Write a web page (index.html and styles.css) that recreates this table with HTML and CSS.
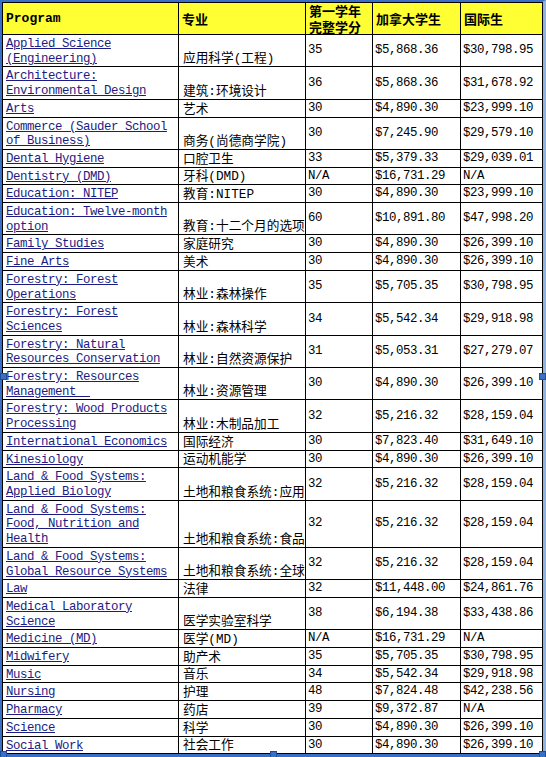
FILE: index.html
```html
<!DOCTYPE html>
<html>
<head>
<meta charset="utf-8">
<title>UBC Tuition</title>
<link rel="stylesheet" href="styles.css">
</head>
<body>
<div class="frame">
<table class="fees">
<colgroup><col class="c1"><col class="c2"><col class="c3"><col class="c4"><col class="c5"></colgroup>
<thead>
<tr><th class="prog">Program</th><th>专业</th><th>第一学年<br>完整学分</th><th>加拿大学生</th><th>国际生</th></tr>
</thead>
<tbody>
<tr><td class="p"><a href="#">Applied Science<br>(Engineering)</a></td><td class="z">应用科学(工程)</td><td>35</td><td>$5,868.36</td><td>$30,798.95</td></tr>
<tr><td class="p"><a href="#">Architecture:<br>Environmental Design</a></td><td class="z">建筑:环境设计</td><td>36</td><td>$5,868.36</td><td>$31,678.92</td></tr>
<tr><td class="p"><a href="#">Arts</a></td><td class="z">艺术</td><td>30</td><td>$4,890.30</td><td>$23,999.10</td></tr>
<tr><td class="p"><a href="#">Commerce (Sauder School<br>of Business)</a></td><td class="z">商务(尚德商学院)</td><td>30</td><td>$7,245.90</td><td>$29,579.10</td></tr>
<tr><td class="p"><a href="#">Dental Hygiene</a></td><td class="z">口腔卫生</td><td>33</td><td>$5,379.33</td><td>$29,039.01</td></tr>
<tr><td class="p"><a href="#">Dentistry (DMD)</a></td><td class="z">牙科(DMD)</td><td>N/A</td><td>$16,731.29</td><td>N/A</td></tr>
<tr><td class="p"><a href="#">Education: NITEP</a></td><td class="z">教育:NITEP</td><td>30</td><td>$4,890.30</td><td>$23,999.10</td></tr>
<tr><td class="p"><a href="#">Education: Twelve-month<br>option</a></td><td class="z">教育:十二个月的选项</td><td>60</td><td>$10,891.80</td><td>$47,998.20</td></tr>
<tr><td class="p"><a href="#">Family Studies</a></td><td class="z">家庭研究</td><td>30</td><td>$4,890.30</td><td>$26,399.10</td></tr>
<tr><td class="p"><a href="#">Fine Arts</a></td><td class="z">美术</td><td>30</td><td>$4,890.30</td><td>$26,399.10</td></tr>
<tr><td class="p"><a href="#">Forestry: Forest<br>Operations</a></td><td class="z">林业:森林操作</td><td>35</td><td>$5,705.35</td><td>$30,798.95</td></tr>
<tr><td class="p"><a href="#">Forestry: Forest<br>Sciences</a></td><td class="z">林业:森林科学</td><td>34</td><td>$5,542.34</td><td>$29,918.98</td></tr>
<tr><td class="p"><a href="#">Forestry: Natural<br>Resources Conservation</a></td><td class="z">林业:自然资源保护</td><td>31</td><td>$5,053.31</td><td>$27,279.07</td></tr>
<tr><td class="p"><a href="#">Forestry: Resources<br>Management&nbsp;&nbsp;</a></td><td class="z">林业:资源管理</td><td>30</td><td>$4,890.30</td><td>$26,399.10</td></tr>
<tr><td class="p"><a href="#">Forestry: Wood Products<br>Processing</a></td><td class="z">林业:木制品加工</td><td>32</td><td>$5,216.32</td><td>$28,159.04</td></tr>
<tr><td class="p"><a href="#">International Economics</a></td><td class="z">国际经济</td><td>30</td><td>$7,823.40</td><td>$31,649.10</td></tr>
<tr><td class="p"><a href="#">Kinesiology</a></td><td class="z">运动机能学</td><td>30</td><td>$4,890.30</td><td>$26,399.10</td></tr>
<tr><td class="p"><a href="#">Land &amp; Food Systems:<br>Applied Biology</a></td><td class="z">土地和粮食系统:应用</td><td>32</td><td>$5,216.32</td><td>$28,159.04</td></tr>
<tr><td class="p"><a href="#">Land &amp; Food Systems:<br>Food, Nutrition and<br>Health</a></td><td class="z">土地和粮食系统:食品</td><td>32</td><td>$5,216.32</td><td>$28,159.04</td></tr>
<tr><td class="p"><a href="#">Land &amp; Food Systems:<br>Global Resource Systems</a></td><td class="z">土地和粮食系统:全球</td><td>32</td><td>$5,216.32</td><td>$28,159.04</td></tr>
<tr><td class="p"><a href="#">Law</a></td><td class="z">法律</td><td>32</td><td>$11,448.00</td><td>$24,861.76</td></tr>
<tr><td class="p"><a href="#">Medical Laboratory<br>Science</a></td><td class="z">医学实验室科学</td><td>38</td><td>$6,194.38</td><td>$33,438.86</td></tr>
<tr><td class="p"><a href="#">Medicine (MD)</a></td><td class="z">医学(MD)</td><td>N/A</td><td>$16,731.29</td><td>N/A</td></tr>
<tr><td class="p"><a href="#">Midwifery</a></td><td class="z">助产术</td><td>35</td><td>$5,705.35</td><td>$30,798.95</td></tr>
<tr><td class="p"><a href="#">Music</a></td><td class="z">音乐</td><td>34</td><td>$5,542.34</td><td>$29,918.98</td></tr>
<tr><td class="p"><a href="#">Nursing</a></td><td class="z">护理</td><td>48</td><td>$7,824.48</td><td>$42,238.56</td></tr>
<tr><td class="p"><a href="#">Pharmacy</a></td><td class="z">药店</td><td>39</td><td>$9,372.87</td><td>N/A</td></tr>
<tr><td class="p"><a href="#">Science</a></td><td class="z">科学</td><td>30</td><td>$4,890.30</td><td>$26,399.10</td></tr>
<tr><td class="p"><a href="#">Social Work</a></td><td class="z">社会工作</td><td>30</td><td>$4,890.30</td><td>$26,399.10</td></tr>
</tbody>
</table>
<span class="handle h-ml"></span>
<span class="handle h-mr"></span>
<span class="handle h-bl"></span>
<span class="handle h-bc"></span>
<span class="handle h-br"></span>
</div>
</body>
</html>
```
FILE: styles.css
```css
html, body {
  margin: 0;
  padding: 0;
  background: #ffffff;
}
body {
  width: 546px;
  height: 757px;
  overflow: hidden;
}
.frame {
  position: relative;
  width: 540px;
  border-left: 2px solid #3a6fc6;
  border-top: 2px solid #3a6fc6;
  border-right: 4px solid #8fb2de;
  border-bottom: 4px solid #3a6fc6;
}
.fees {
  border-collapse: collapse;
  table-layout: fixed;
  width: 540px;
  font-family: "Liberation Mono", "Noto Sans CJK SC", monospace;
  font-size: 12.4px;
  letter-spacing: -0.44px;
  line-height: 14.7px;
  color: #000;
}
.c1 { width: 176px; }
.c2 { width: 127px; }
.c3 { width: 67px; }
.c4 { width: 88px; }
.c5 { width: 82px; }
.fees th, .fees td {
  border: 1px solid #000;
  padding: 1px 2px;
  overflow: hidden;
}
.fees th {
  background: #ffff33;
  height: 30px;
  padding: 0 2px 0 3px;
  font-family: "Noto Sans CJK SC", sans-serif;
  font-size: 13px;
  line-height: 15.5px;
  letter-spacing: 0;
  font-weight: bold;
  text-align: left;
  vertical-align: middle;
}
.fees th.prog {
  font-family: "Liberation Mono", monospace;
  font-size: 13px;
}
.fees td {
  vertical-align: middle;
  white-space: nowrap;
}
.fees td.p {
  vertical-align: top;
  padding-left: 3px;
  padding-top: 2px;
  padding-bottom: 0;
}
.fees td.z {
  vertical-align: bottom;
  padding-left: 4px;
  padding-right: 0;
  padding-bottom: 1px;
  font-size: 12.7px;
  letter-spacing: 0;
  line-height: 12px;
}
.fees a {
  color: #1c1c84;
  text-decoration: underline;
}
.handle {
  position: absolute;
  width: 5px;
  height: 5px;
  background: #3a6fc6;
  border: 1px solid #1d4c9a;
}
.h-ml { left: -2px; top: 371px; }
.h-mr { right: -4px; top: 371px; }
.h-bl { left: -2px; bottom: -4px; }
.h-bc { left: 268px; bottom: -4px; }
.h-br { right: -4px; bottom: -4px; }
```
